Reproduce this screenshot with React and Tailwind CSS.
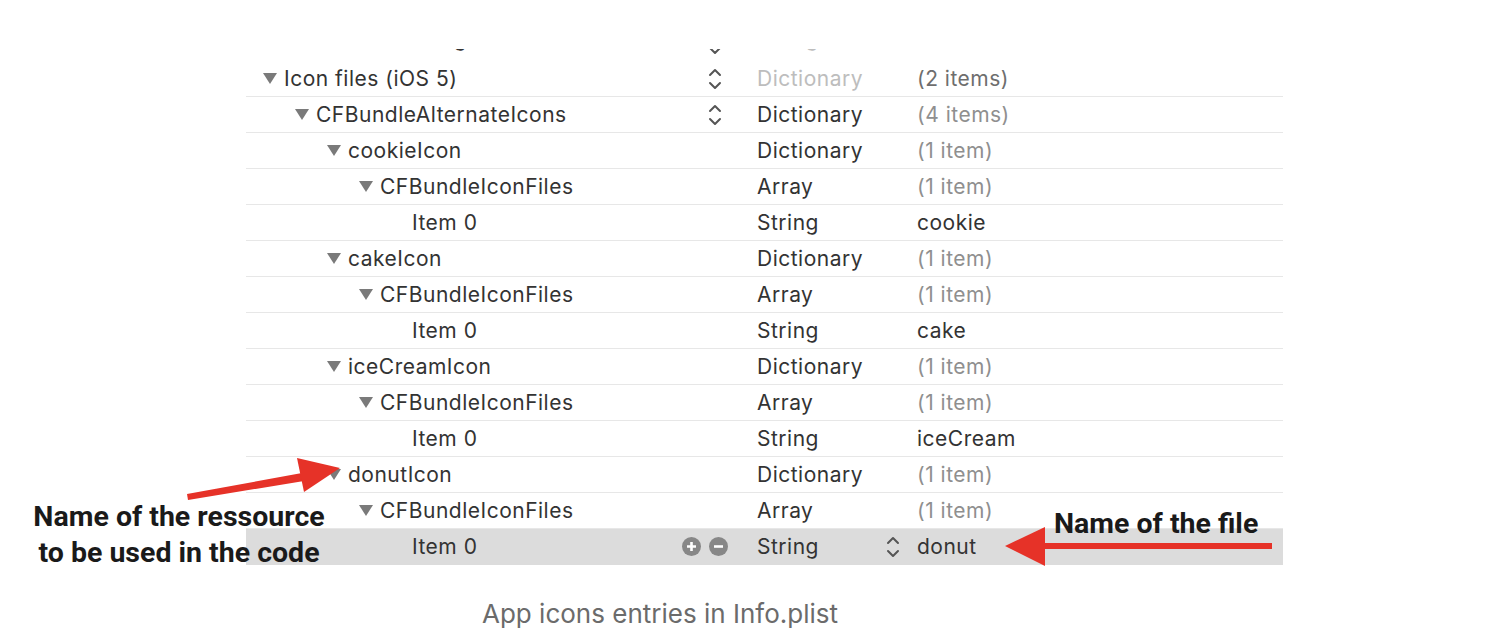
const rows = [
  { key: "Icon files (iOS 5)", level: 0, open: true, stepper: true, type: "Dictionary", typeDim: true, value: "(2 items)", valueTone: "mid" },
  { key: "CFBundleAlternateIcons", level: 1, open: true, stepper: true, type: "Dictionary", value: "(4 items)", valueTone: "dim" },
  { key: "cookieIcon", level: 2, open: true, type: "Dictionary", value: "(1 item)", valueTone: "dim" },
  { key: "CFBundleIconFiles", level: 3, open: true, type: "Array", value: "(1 item)", valueTone: "dim" },
  { key: "Item 0", level: 4, type: "String", value: "cookie" },
  { key: "cakeIcon", level: 2, open: true, type: "Dictionary", value: "(1 item)", valueTone: "dim" },
  { key: "CFBundleIconFiles", level: 3, open: true, type: "Array", value: "(1 item)", valueTone: "dim" },
  { key: "Item 0", level: 4, type: "String", value: "cake" },
  { key: "iceCreamIcon", level: 2, open: true, type: "Dictionary", value: "(1 item)", valueTone: "dim" },
  { key: "CFBundleIconFiles", level: 3, open: true, type: "Array", value: "(1 item)", valueTone: "dim" },
  { key: "Item 0", level: 4, type: "String", value: "iceCream" },
  { key: "donutIcon", level: 2, open: true, type: "Dictionary", value: "(1 item)", valueTone: "dim" },
  { key: "CFBundleIconFiles", level: 3, open: true, type: "Array", value: "(1 item)", valueTone: "dim" },
  { key: "Item 0", level: 4, type: "String", value: "donut", selected: true },
];

const indent = ["pl-[17px]", "pl-[49px]", "pl-[81px]", "pl-[113px]", "pl-[166px]"];

function Triangle() {
  return (
    <svg width="14" height="11" viewBox="0 0 14 11" className="shrink-0 mr-[7px]">
      <polygon points="0,0 14,0 7,11" fill="#7a7a7a" />
    </svg>
  );
}

function Stepper() {
  return (
    <svg width="14" height="24" viewBox="0 0 14 24" className="shrink-0">
      <path d="M2 8 L7 3 L12 8" fill="none" stroke="#555" strokeWidth="2" strokeLinecap="round" strokeLinejoin="round" />
      <path d="M2 16 L7 21 L12 16" fill="none" stroke="#555" strokeWidth="2" strokeLinecap="round" strokeLinejoin="round" />
    </svg>
  );
}

function PlusMinus() {
  return (
    <div className="flex items-center gap-[8px]">
      <svg width="19" height="19" viewBox="0 0 19 19">
        <circle cx="9.5" cy="9.5" r="9.5" fill="#878787" />
        <path d="M5 9.5 H14 M9.5 5 V14" stroke="#fff" strokeWidth="2.6" />
      </svg>
      <svg width="19" height="19" viewBox="0 0 19 19">
        <circle cx="9.5" cy="9.5" r="9.5" fill="#878787" />
        <path d="M5 9.5 H14" stroke="#fff" strokeWidth="2.6" />
      </svg>
    </div>
  );
}

function Row({ row }) {
  const valueColor =
    row.valueTone === "dim" ? "text-[#8f8f8f]" : row.valueTone === "mid" ? "text-[#6e6e6e]" : "text-[#333]";
  return (
    <div
      className={`flex items-center h-[36px] border-b ${row.selected ? "bg-[#dcdcdc] border-transparent" : "border-[#e7e7e7]"}`}
    >
      <div className={`w-[434px] flex items-center ${indent[row.level]}`}>
        {row.open && <Triangle />}
        <span className="text-[#333] whitespace-nowrap">{row.key}</span>
      </div>
      <div className="w-[77px] flex items-center">
        {row.stepper && <div className="pl-[28px] flex"><Stepper /></div>}
        {row.selected && <div className="pl-[2px] flex"><PlusMinus /></div>}
      </div>
      <div className="w-[160px] flex items-center">
        <span className={row.typeDim ? "text-[#bdbdbd]" : "text-[#333]"}>{row.type}</span>
        {row.selected && <div className="ml-auto mr-[17px] flex"><Stepper /></div>}
      </div>
      <div className={`flex-1 ${valueColor}`}>{row.value}</div>
    </div>
  );
}

export default function App() {
  return (
    <div className="relative w-[1498px] h-[642px] bg-white overflow-hidden font-['Inter',sans-serif]">
      <div className="pt-[49px]">
        <div className="ml-[246px] w-[1037px] text-[21px] tracking-[0.5px]">
          {/* row cut off by the top edge of the screenshot */}
          <div className="h-[12px] overflow-hidden">
            <div className="mt-[-28px] flex items-center h-[36px]">
              <div className="w-[434px] pl-[38px] text-[#333] whitespace-nowrap">Status bar setting (iOS)</div>
              <div className="w-[77px] pl-[28px] flex mt-[10px]"><Stepper /></div>
              <div className="w-[160px] text-[#bdbdbd]">String</div>
            </div>
          </div>
          {rows.map((row, i) => (
            <Row key={i} row={row} />
          ))}
        </div>
        <p className="mt-[29px] pr-[178px] text-center text-[26px] text-[#6b6b6b]">App icons entries in Info.plist</p>
      </div>

      {/* annotations */}
      <svg className="absolute left-0 top-0 pointer-events-none" width="1498" height="642" viewBox="0 0 1498 642">
        <polygon points="187,494 302,473 304,481 188,500" fill="#e63228" />
        <polygon points="340,468 297,458 304,492" fill="#e63228" />
        <rect x="1040" y="543" width="232" height="6" fill="#e63228" />
        <polygon points="1005,546 1045,527 1045,566" fill="#e63228" />
      </svg>
      <div className="absolute left-[22px] top-[499px] w-[314px] text-center font-['Roboto',sans-serif] font-bold text-[28.5px] leading-[36px] text-[#1a1a1a]">
        Name of the ressource
        <br />
        to be used in the code
      </div>
      <div className="absolute left-[1054px] top-[506px] font-['Roboto',sans-serif] font-bold text-[28.5px] leading-[36px] text-[#1a1a1a]">
        Name of the file
      </div>
    </div>
  );
}
